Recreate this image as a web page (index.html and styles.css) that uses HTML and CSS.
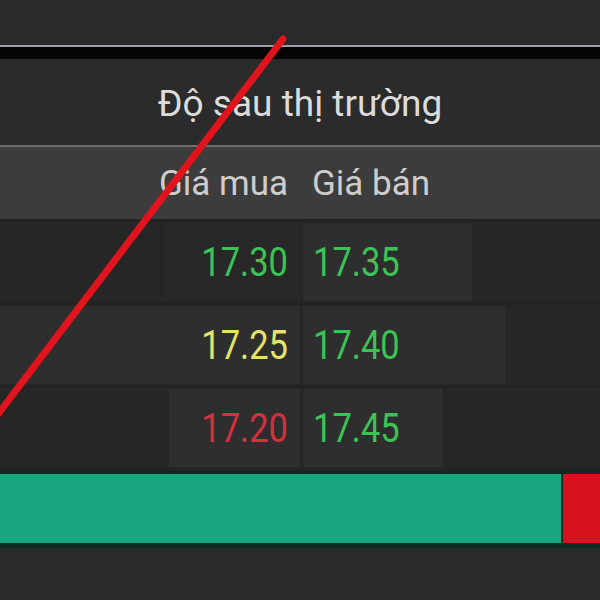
FILE: index.html
```html
<!DOCTYPE html>
<html lang="vi">
<head>
    <meta charset="UTF-8">
    <meta name="viewport" content="width=device-width, initial-scale=1.0">
    <title>Độ sâu thị trường</title>
    <link rel="stylesheet" href="styles.css">
</head>
<body>
    <div class="page">
        <div class="topbar"></div>
        <div class="band"></div>
        <div class="title"><span class="txt">Độ sau thị trường</span></div>
        <div class="depth">
            <div class="thead">
                <div class="hcell bid"><span class="txt">Giá mua</span></div>
                <div class="hcell ask"><span class="txt">Giá bán</span></div>
            </div>
            <div class="row">
                <div class="cell bid"><span class="vol faint" style="width:135px"></span><span class="txt price up">17.30</span></div>
                <div class="cell ask"><span class="vol" style="width:169px"></span><span class="txt price up">17.35</span></div>
            </div>
            <div class="row">
                <div class="cell bid"><span class="vol" style="width:300px"></span><span class="txt price ref">17.25</span></div>
                <div class="cell ask"><span class="vol" style="width:202px"></span><span class="txt price up">17.40</span></div>
            </div>
            <div class="row">
                <div class="cell bid"><span class="vol" style="width:131px"></span><span class="txt price down">17.20</span></div>
                <div class="cell ask"><span class="vol" style="width:139px"></span><span class="txt price up">17.45</span></div>
            </div>
        </div>
        <div class="ratio">
            <div class="buy" style="width:561px"></div>
            <div class="sell"></div>
        </div>
        <div class="bottom"></div>
    </div>
    <!-- vạch đỏ vẽ tay đè lên ảnh -->
    <svg class="mark" width="600" height="600" viewBox="0 0 600 600">
        <line x1="283" y1="39" x2="-8" y2="422" stroke="#e1141d" stroke-width="7" stroke-linecap="round"/>
    </svg>
</body>
</html>
```

FILE: styles.css
```css
body {
    margin: 0;
    background-color: #2a2a2a;
    font-family: Roboto, "Noto Sans", sans-serif;
    color: #d6d6d6;
    overflow: hidden;
}
.page {
    width: 600px;
    height: 600px;
    display: flex;
    flex-direction: column;
}
.txt {
    display: inline-block;
}
.topbar {
    height: 45px;
    background-color: #2a2a2a;
}
.band {
    height: 12px;
    background-color: #050507;
    border-top: 2px solid #9c9ca4;
}
.title {
    height: 86px;
    background-color: #2b2b2b;
    display: flex;
    align-items: center;
    justify-content: center;
    font-size: 37px;
    color: #dcdcdc;
    padding-top: 2px;
    box-sizing: border-box;
}
.depth {
    display: flex;
    flex-direction: column;
    background-color: #1f1f1f;
}
.thead {
    height: 72px;
    display: grid;
    grid-template-columns: 300px 300px;
    background-color: #3c3c3c;
    border-top: 2px solid #6c6c6c;
    border-bottom: 3px solid #222;
    font-size: 35px;
    color: #cdcdcd;
}
.hcell {
    display: flex;
    align-items: center;
}
.hcell.bid {
    justify-content: flex-end;
    padding-right: 12px;
}
.hcell.ask {
    padding-left: 12px;
}
.row {
    height: 80px;
    display: grid;
    grid-template-columns: 300px 297px;
    column-gap: 3px;
    background-color: #262626;
    border-bottom: 3px solid #232323;
}
.cell {
    position: relative;
    display: flex;
    align-items: center;
    font-size: 34.5px;
}
.cell .txt {
    transform: scaleY(1.2);
}
.cell.bid {
    justify-content: flex-end;
    padding-right: 12px;
}
.cell.ask {
    padding-left: 10px;
}
.vol {
    position: absolute;
    top: 1px;
    bottom: 1px;
    background-color: #2e2e2e;
}
.vol.faint {
    background-color: #282828;
}
.cell.bid .vol {
    right: 0;
}
.cell.ask .vol {
    left: 0;
}
.price {
    position: relative;
}
.up {
    color: #3cc356;
}
.ref {
    color: #e4e46a;
}
.down {
    color: #d7303d;
}
.ratio {
    height: 69px;
    display: flex;
    border-top: 3px solid #0e2a22;
    border-bottom: 5px solid #0e2a22;
    background-color: #0e2a22;
    gap: 2px;
}
.buy {
    background-color: #17a67d;
}
.sell {
    flex: 1;
    background-color: #d8131f;
}
.bottom {
    flex: 1;
    background-color: #2a2a2a;
}
.mark {
    position: absolute;
    top: 0;
    left: 0;
    pointer-events: none;
}
```
